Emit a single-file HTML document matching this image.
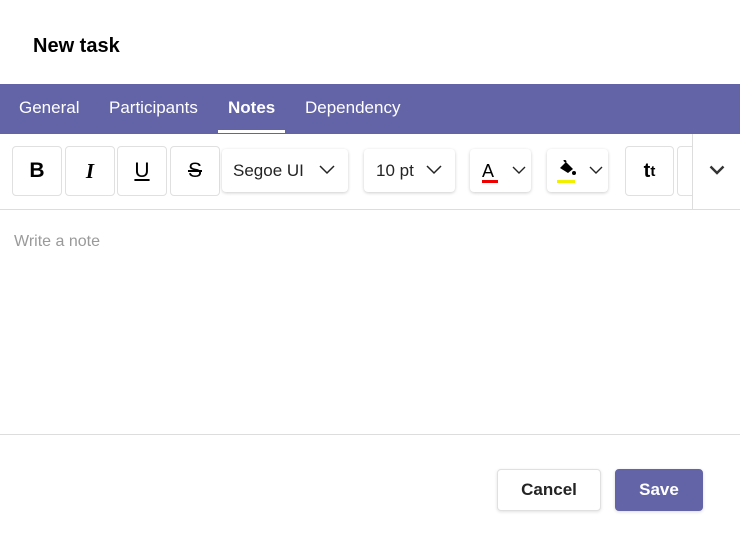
<!DOCTYPE html>
<html><head><style>
*{box-sizing:border-box;margin:0;padding:0}
body{width:740px;height:533px;background:#fff;font-family:"Liberation Sans",sans-serif;position:relative;overflow:hidden;color:#242424}
.a{position:absolute}
.btn{position:absolute;border:1px solid #e0e0e0;border-radius:4px;background:#fff;display:flex;align-items:center;justify-content:center}
.dd{position:absolute;border-radius:4px;background:#fff;box-shadow:0 1px 3px rgba(0,0,0,.2);display:flex;align-items:center}
.tab{position:absolute;top:98px;color:#fff;font-size:17px}
</style></head><body>
<div class="a" style="left:33px;top:35px;font-size:20px;font-weight:bold;color:#000">New task</div>
<div class="a" style="left:0;top:84px;width:740px;height:50px;background:#6264a7"></div>
<div class="tab" style="left:19px">General</div>
<div class="tab" style="left:109px">Participants</div>
<div class="tab" style="left:228px;font-weight:bold">Notes</div>
<div class="tab" style="left:305px">Dependency</div>
<div class="a" style="left:218px;top:130px;width:67px;height:3px;background:#fff"></div>

<div class="btn" style="left:12px;top:146px;width:50px;height:50px;font-weight:bold;font-size:21px;color:#000">B</div>
<div class="btn" style="left:65px;top:146px;width:50px;height:50px;font-weight:bold;font-style:italic;font-size:21px;color:#000;font-family:'Liberation Serif',serif">I</div>
<div class="btn" style="left:117px;top:146px;width:50px;height:50px;font-size:21px;color:#000;text-decoration:underline">U</div>
<div class="btn" style="left:170px;top:146px;width:50px;height:50px;font-size:21px;color:#000;text-decoration:line-through">S</div>
<div class="dd" style="left:222px;top:149px;width:126px;height:43px;padding-left:11px;font-size:17px">Segoe UI
<svg class="a" style="left:97px;top:16px" width="16" height="10" viewBox="0 0 16 10"><path d="M1 1l7 7 7-7" fill="none" stroke="#242424" stroke-width="1.5"/></svg></div>
<div class="dd" style="left:364px;top:149px;width:91px;height:43px;padding-left:12px;font-size:17px">10 pt
<svg class="a" style="left:62px;top:16px" width="16" height="10" viewBox="0 0 16 10"><path d="M1 1l7 7 7-7" fill="none" stroke="#242424" stroke-width="1.5"/></svg></div>
<div class="dd" style="left:470px;top:149px;width:61px;height:43px">
<span class="a" style="left:12px;top:12px;font-size:18px;color:#000">A</span>
<div class="a" style="left:12px;top:31px;width:16px;height:3px;background:#e00"></div>
<svg class="a" style="left:42px;top:17px" width="14" height="9" viewBox="0 0 14 9"><path d="M1 1l6 6 6-6" fill="none" stroke="#242424" stroke-width="1.4"/></svg></div>
<div class="dd" style="left:547px;top:149px;width:61px;height:43px">
<svg class="a" style="left:10px;top:11px" width="20" height="16" viewBox="0 0 20 16"><path d="M3 8l6-6 7 7-5 4z" fill="#000"/><path d="M9 2l-2-2" stroke="#000" stroke-width="2"/><circle cx="17" cy="13" r="2" fill="#000"/></svg>
<div class="a" style="left:10px;top:31px;width:18px;height:3px;background:#f0f000"></div>
<svg class="a" style="left:42px;top:17px" width="14" height="9" viewBox="0 0 14 9"><path d="M1 1l6 6 6-6" fill="none" stroke="#242424" stroke-width="1.4"/></svg></div>
<div class="btn" style="left:625px;top:146px;width:49px;height:50px;font-weight:bold;font-size:20px;color:#000">t<span style="font-size:15px">t</span></div>
<div class="btn" style="left:677px;top:146px;width:40px;height:50px"></div>
<div class="a" style="left:692px;top:134px;width:48px;height:75px;background:#fff;border-left:1px solid #ddd"></div>
<svg class="a" style="left:709px;top:165px" width="16" height="10" viewBox="0 0 16 10"><path d="M1.5 1.5l6.5 6.5 6.5-6.5" fill="none" stroke="#333" stroke-width="2.4"/></svg>
<div class="a" style="left:0;top:209px;width:740px;height:1px;background:#ddd"></div>
<div class="a" style="left:14px;top:233px;font-size:16px;color:#9a9a9a">Write a note</div>
<div class="a" style="left:0;top:434px;width:740px;height:1px;background:#ddd"></div>
<div class="btn" style="left:497px;top:469px;width:104px;height:42px;font-size:17px;font-weight:bold;color:#242424;box-shadow:0 1px 3px rgba(0,0,0,.12)">Cancel</div>
<div class="btn" style="left:615px;top:469px;width:88px;height:42px;font-size:17px;font-weight:bold;color:#fff;background:#6264a7;border-color:#6264a7;box-shadow:0 1px 3px rgba(0,0,0,.15)">Save</div>
</body></html>
